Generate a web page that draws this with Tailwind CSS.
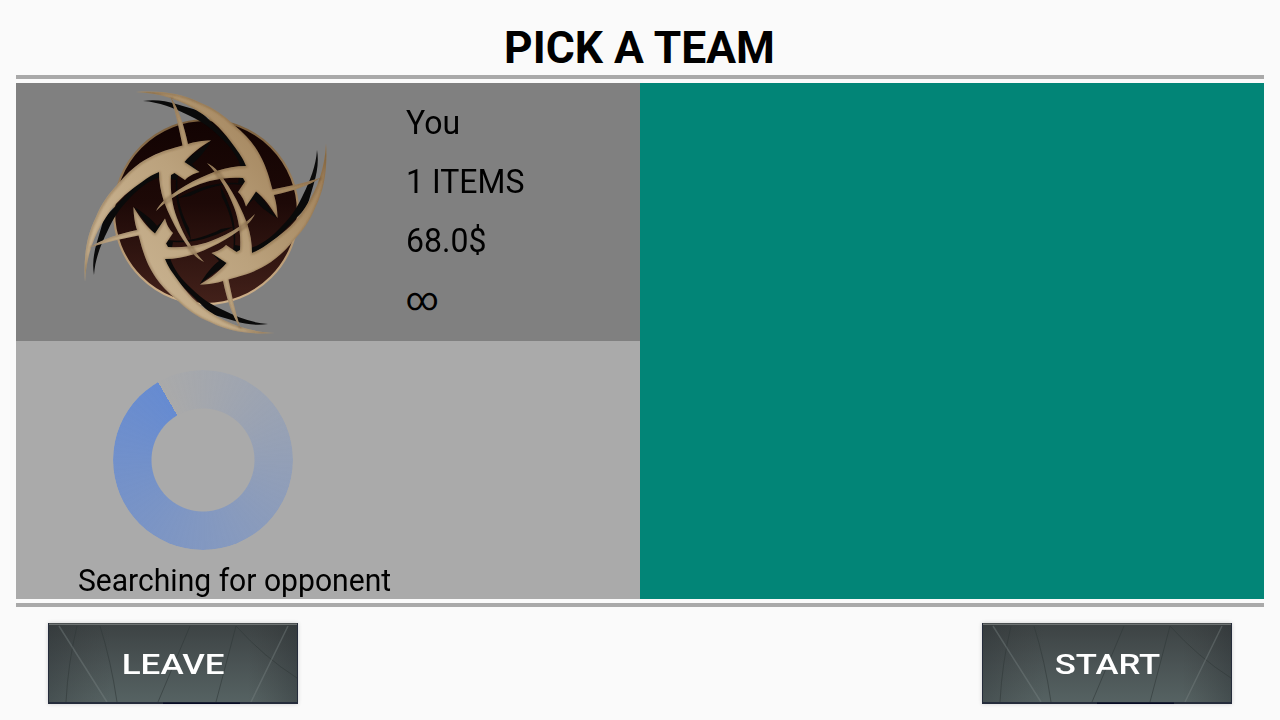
<!DOCTYPE html>
<html lang="en">
<head>
<meta charset="utf-8">
<title>Pick a team</title>
<script src="https://cdn.jsdelivr.net/npm/@tailwindcss/browser@4"></script>
</head>
<body class="w-[1280px] h-[720px] overflow-hidden bg-[#fafafa] text-black font-['Roboto',sans-serif]">
<div class="flex flex-col h-[720px] px-4">
  <header class="h-[75px] shrink-0 flex justify-center pt-[22px]">
    <h1 class="text-[44.400px] leading-[52px] font-bold whitespace-nowrap -ml-px">PICK A TEAM</h1>
  </header>
  <div class="h-1 shrink-0 bg-[#a9a9a9]"></div>
  <main class="mt-1 h-[516px] shrink-0 grid grid-cols-2">
    <div class="flex flex-col">
      <section class="h-[258px] bg-[#808080] flex">
        <svg class="w-[390px] h-[258px] shrink-0" viewBox="16 83 390 258">
          <defs>
            <path id="arm" d="M136 92C160 90.500 181 93 200 102.500C214 108 225 116 234 125C243 132 250 140 255 147C263 159 266 168 268 174C270 180 271 185 272.500 189.500C289 186 305 183 321 177.500C311 185 293 191 274 195C276 201 277.500 210 277.500 218C271 207 264 198 256 191.500L246 206.500C244 200 242 196 238 192L245 181.500L243 178C228 177 213 179 200 184C184 190 168 199 156 211C160 203 166 198 172 194.500C181 188 190 182.500 200 178C216 170 230 166 246 166C243 158 239 153 234 146C225 133 214 121 200 112.500C181 100 160 93 136 92Z"/>
            <path id="shade" d="M143 101C155 99 166 101 176 104L200 111L236 146L248 168L244 185C224 182 205 188 190 196L178 198C205 184 222 182 238 183L241 167C237 155 229 145 219 136C209 126 199 120 188 115C174 108 159 102 143 101ZM256 190L277 218C268 213 258 205 254 199L246 206L249 197Z"/>
            <clipPath id="arms">
              <use href="#arm"/>
              <use href="#arm" transform="rotate(90 205.500 212.500)"/>
              <use href="#arm" transform="rotate(180 205.500 212.500)"/>
              <use href="#arm" transform="rotate(270 205.500 212.500)"/>
            </clipPath>
            <linearGradient id="gold" gradientUnits="userSpaceOnUse" x1="110" y1="280" x2="290" y2="130">
              <stop offset="0" stop-color="#cbb593"/><stop offset=".5" stop-color="#bba27d"/><stop offset="1" stop-color="#a08159"/>
            </linearGradient>
            <linearGradient id="disc" x1="0" y1="0" x2="0" y2="1">
              <stop offset="0" stop-color="#120302"/><stop offset=".45" stop-color="#1d0907"/><stop offset="1" stop-color="#43211a"/>
            </linearGradient>
            <linearGradient id="rim" x1="0" y1="0" x2="0" y2="1">
              <stop offset="0" stop-color="#7b5f3d"/><stop offset="1" stop-color="#cfb18a"/>
            </linearGradient>
            <filter id="soft"><feGaussianBlur stdDeviation="1.300"/></filter>
          </defs>
          <circle cx="206" cy="212" r="92" fill="url(#disc)" stroke="url(#rim)" stroke-width="2.200"/>
          <g fill="#0a0a0a">
            <use href="#shade"/>
            <use href="#shade" transform="rotate(90 205.500 212.500)"/>
            <use href="#shade" transform="rotate(180 205.500 212.500)"/>
            <use href="#shade" transform="rotate(270 205.500 212.500)"/>
          </g>
          <g clip-path="url(#arms)">
            <rect x="80" y="88" width="250" height="250" fill="url(#gold)"/>
            <g fill="none" stroke="#5b4023" stroke-opacity=".5" stroke-width="1.500" filter="url(#soft)" transform="translate(.4 .6)">
              <use href="#arm"/>
              <use href="#arm" transform="rotate(90 205.500 212.500)"/>
              <use href="#arm" transform="rotate(180 205.500 212.500)"/>
              <use href="#arm" transform="rotate(270 205.500 212.500)"/>
            </g>
          </g>
        </svg>
        <div class="flex flex-col pt-[11px] text-[32px] leading-[59.200px]">
          <p class="scale-y-[1.030]">You</p><p class="scale-y-[1.030]">1 ITEMS</p><p class="scale-y-[1.030]">68.0$</p><p class="-mt-[2px]">∞</p>
        </div>
      </section>
      <section class="h-[258px] bg-[#aaaaaa] flex">
        <div class="w-[374px] flex flex-col items-center pt-[29px]">
          <div class="size-[180px] mr-px rounded-full bg-[conic-gradient(from_-30deg,#668bd100_0deg,#668bd1_360deg)] [mask-image:radial-gradient(circle,transparent_51px,black_52px)]"></div>
          <p class="text-[30.100px] leading-9 mt-[12.500px] ml-[63px] whitespace-nowrap scale-y-[1.030]">Searching for opponent</p>
        </div>
      </section>
    </div>
    <section class="bg-[#028577]"></section>
  </main>
  <div class="mt-1 h-1 shrink-0 bg-[#a9a9a9]"></div>
  <footer class="flex justify-between px-8 pt-4">
    <button class="grid w-[250px] h-[81px] shadow-[0_0_4px_#0000002e]">
      <svg class="col-start-1 row-start-1" width="250" height="81" viewBox="0 0 250 81">
        <defs>
          <linearGradient id="steel" x1="0" y1="0" x2="0" y2="1"><stop offset="0" stop-color="#3c4243"/><stop offset=".5" stop-color="#4a5354"/><stop offset="1" stop-color="#566363"/></linearGradient>
          <linearGradient id="sides"><stop offset="0" stop-color="#23282c" stop-opacity=".3"/><stop offset=".25" stop-color="#333" stop-opacity="0"/><stop offset=".8" stop-color="#333" stop-opacity="0"/><stop offset="1" stop-color="#23282c" stop-opacity=".35"/></linearGradient>
          <g id="plate">
            <path fill="url(#steel)" d="M0 0h250v81H0z"/>
            <path fill="url(#sides)" d="M0 0h250v81H0z"/>
            <g fill="none" stroke="#303839" stroke-opacity=".6"><path d="M29 3Q20 40 18 79M52 3Q63 38 69 79M142 3L110 79M188 3L168 79M188 3Q216 34 249 55"/></g>
            <g fill="none" stroke="#7b8585" stroke-width="1.500" stroke-opacity=".4"><path d="M11 3L59 79M240 3L203 79"/></g>
            <path fill="#6d7272" d="M0 1h250v1H0z"/><path fill="#4b5051" d="M0 0h250v1H0z"/>
            <path fill="#252c3b" d="M0 79h250v2H0zM0 0h1v81H0zM249 0h1v81h-1z"/>
            <path fill="#070b24" d="M115 79.500h77V81h-77z"/>
          </g>
        </defs>
        <use href="#plate"/>
      </svg>
      <span class="col-start-1 row-start-1 self-center justify-self-center mt-[2px] text-[28px] font-medium leading-8 text-white scale-x-[1.250]">LEAVE</span>
    </button>
    <button class="grid w-[250px] h-[81px] shadow-[0_0_4px_#0000002e]">
      <svg class="col-start-1 row-start-1" width="250" height="81" viewBox="0 0 250 81"><use href="#plate"/></svg>
      <span class="col-start-1 row-start-1 self-center justify-self-center mt-[2px] ml-px text-[28px] font-medium leading-8 text-white scale-x-[1.240]">START</span>
    </button>
  </footer>
</div>
</body>
</html>
